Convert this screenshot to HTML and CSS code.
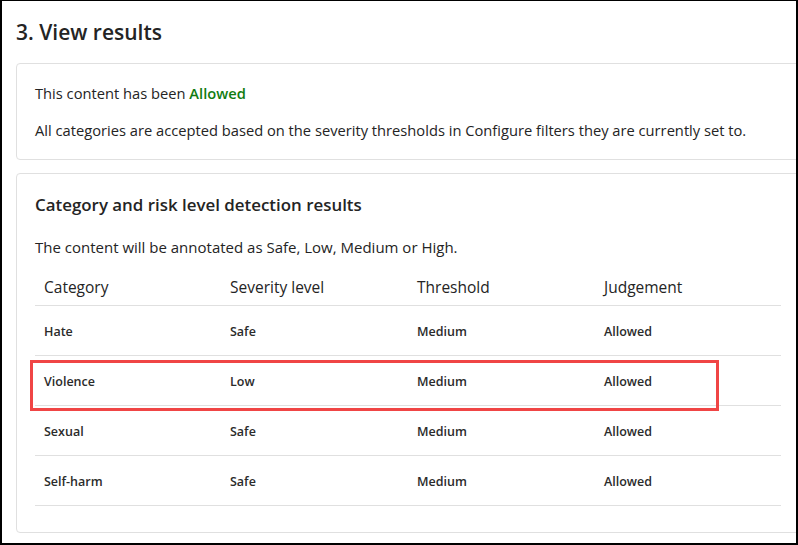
FILE: index.html
```html
<!DOCTYPE html>
<html lang="en">
<head>
<meta charset="utf-8">
<title>View results</title>
<link rel="stylesheet" href="styles.css">
</head>
<body>
<div class="frame">
  <h1 class="title">3. View results</h1>
  <section class="card card-status">
    <p class="status">This content has been <strong class="allowed">Allowed</strong></p>
    <p class="desc">All categories are accepted based on the severity thresholds in Configure filters they are currently set to.</p>
  </section>
  <section class="card card-results">
    <h2 class="subtitle">Category and risk level detection results</h2>
    <p class="note">The content will be annotated as Safe, Low, Medium or High.</p>
    <div class="grid">
      <div class="row head">
        <div class="cell">Category</div>
        <div class="cell">Severity level</div>
        <div class="cell">Threshold</div>
        <div class="cell">Judgement</div>
      </div>
      <div class="row">
        <div class="cell">Hate</div>
        <div class="cell">Safe</div>
        <div class="cell">Medium</div>
        <div class="cell">Allowed</div>
      </div>
      <div class="row highlighted">
        <div class="cell">Violence</div>
        <div class="cell">Low</div>
        <div class="cell">Medium</div>
        <div class="cell">Allowed</div>
      </div>
      <div class="row">
        <div class="cell">Sexual</div>
        <div class="cell">Safe</div>
        <div class="cell">Medium</div>
        <div class="cell">Allowed</div>
      </div>
      <div class="row">
        <div class="cell">Self-harm</div>
        <div class="cell">Safe</div>
        <div class="cell">Medium</div>
        <div class="cell">Allowed</div>
      </div>
    </div>
  </section>
</div>
</body>
</html>
```

FILE: styles.css
```css
* { box-sizing: border-box; }
html, body { margin: 0; padding: 0; background: #fff; }
body {
  font-family: "Open Sans", "Noto Sans", sans-serif;
  color: #242424;
}
.frame {
  width: 798px;
  height: 545px;
  border-top: 1px solid #000;
  border-left: 2px solid #000;
  border-right: 2px solid #000;
  border-bottom: 2px solid #000;
  overflow: hidden;
  padding-left: 14px;
}
.title {
  margin: 17px 0 17px 0;
  font-size: 21px;
  line-height: 28px;
  font-weight: 600;
  color: #242424;
}
.card {
  border: 1px solid #e0e0e0;
  border-radius: 4px;
  margin-right: -30px;
  padding-left: 18px;
}
.card-status {
  padding-top: 19px;
  padding-bottom: 19px;
}
.card-status p {
  margin: 0;
  font-size: 14.7px;
  line-height: 20px;
}
.card-status .desc { margin-top: 17px; }
.allowed { color: #107c10; font-weight: 600; }
.card-results {
  margin-top: 13px;
  padding-top: 19px;
  padding-bottom: 26px;
}
.subtitle {
  margin: 0;
  font-size: 16.9px;
  line-height: 24px;
  font-weight: 600;
}
.note {
  margin: 20px 0 0 0;
  font-size: 15px;
  line-height: 20px;
}
.grid { width: 746px; margin-top: 11px; }
.row {
  display: grid;
  grid-template-columns: 186px 187px 187px 186px;
  border-bottom: 1px solid #e0e0e0;
  position: relative;
  height: 50px;
  align-items: center;
}
.row.head {
  height: 38px;
  align-items: start;
  padding-top: 9px;
}
.cell {
  padding-left: 9px;
  padding-top: 2px;
  font-size: 12.5px;
  line-height: 20px;
  font-weight: 600;
  color: #2b2b2b;
}
.head .cell {
  padding-top: 0;
  font-size: 15.5px;
  font-weight: 400;
  color: #242424;
}
.highlighted::after {
  content: "";
  position: absolute;
  left: -5px;
  top: 4px;
  width: 683px;
  height: 45px;
  border: 3px solid #f04545;
  pointer-events: none;
}
```
